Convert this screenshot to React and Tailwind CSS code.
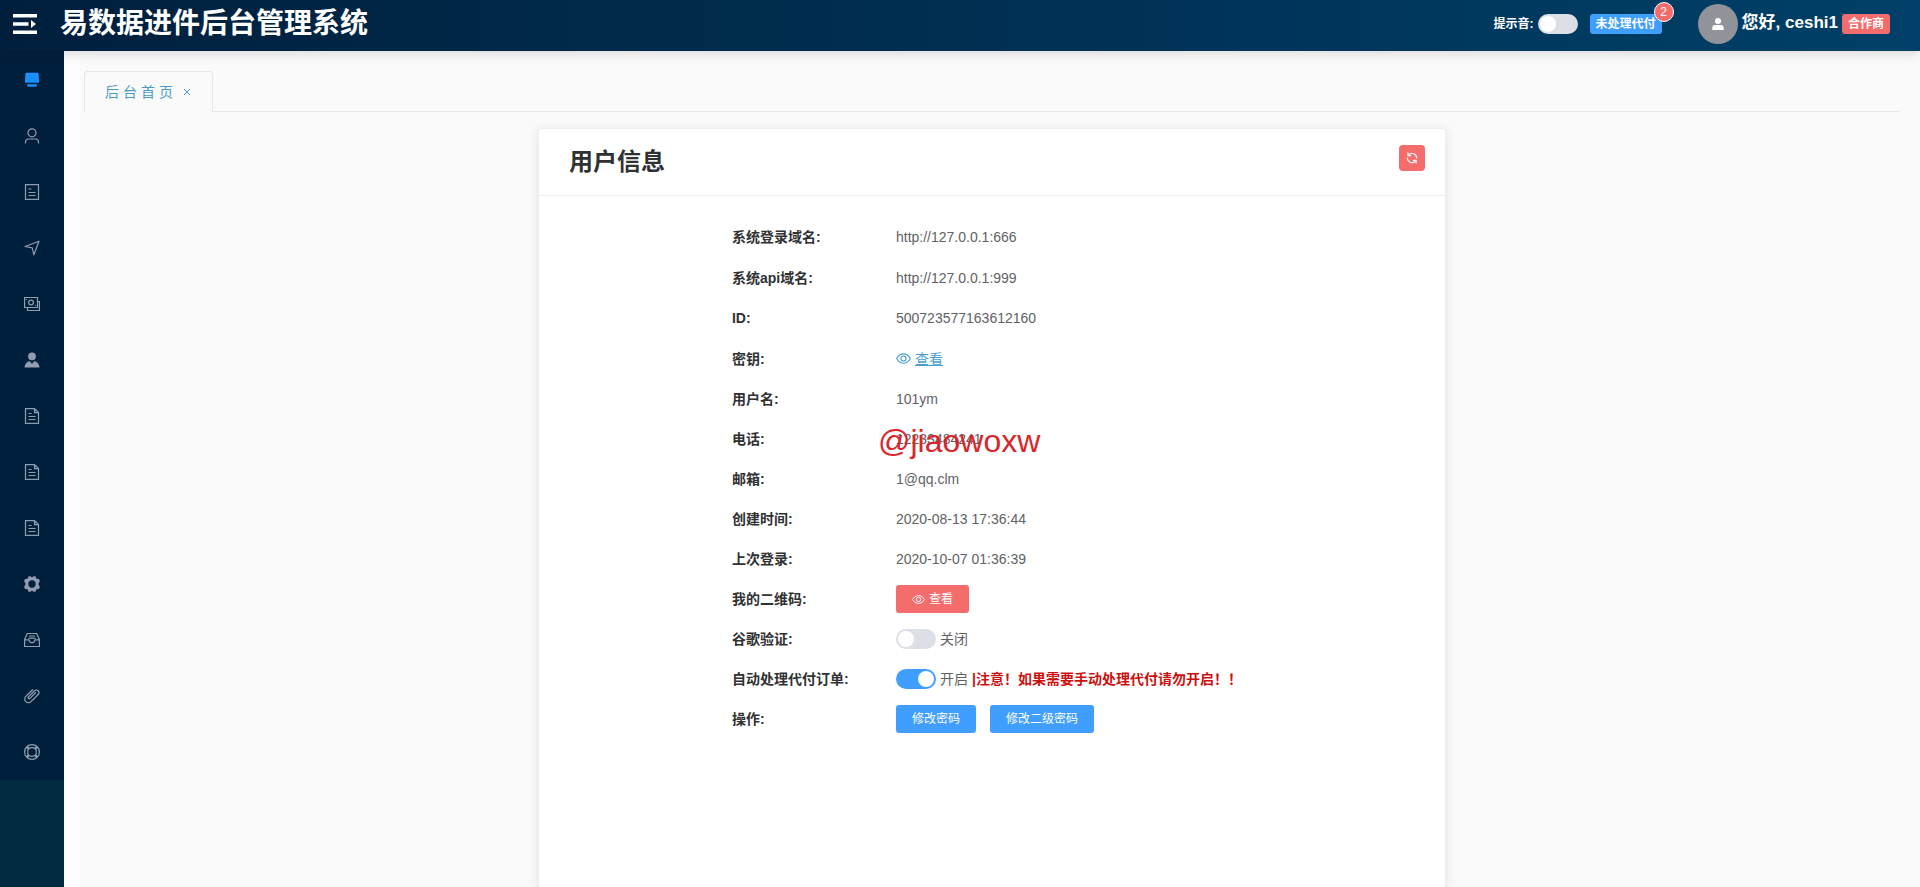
import React, { useState } from 'react';

const iconProps = {
  width: 16,
  height: 16,
  viewBox: '0 0 16 16',
  fill: 'none',
  stroke: 'currentColor',
  strokeWidth: 1,
  'aria-hidden': true,
};

const MenuToggleIcon = () => (
  <svg width="24" height="20" viewBox="0 0 24 20" fill="currentColor" aria-hidden="true">
    <path d="M0 0h24v3.6H0zM0 8.200h15.500v3.6H0zM0 16.400h24v3.6H0zM18 6l5 4-5 4z" />
  </svg>
);

const HomeIcon = () => (
  <svg {...iconProps} fill="currentColor" stroke="none">
    <path d="M2.500 .8h11q1 0 1.100 1l.5 7.700q0 1.300-1.100 1.300H2q-1.100 0-1.100-1.300l.5-7.700q.1-1 1.100-1zM3 12.200h10l-.6 2.600H3.600z" />
  </svg>
);

const UserIcon = () => (
  <svg {...iconProps} strokeWidth="1.200">
    <circle cx="8" cy="4.800" r="4" />
    <path d="M1.500 15.500v-1.500q0-3 3-3h7q3 0 3 3v1.500" />
  </svg>
);

const TicketsIcon = () => (
  <svg {...iconProps} strokeWidth="1.200">
    <path d="M1.500 .6h13v14.800h-13zM4.500 5h3M4.500 8.500h7M4.500 11.500h7" />
  </svg>
);

const PositionIcon = () => (
  <svg {...iconProps} strokeWidth="1.200">
    <path d="M1 6.500 15 1.200 9.800 15 8.300 7.900z" strokeLinejoin="round" />
  </svg>
);

const MoneyIcon = () => (
  <svg {...iconProps} strokeWidth="1.200">
    <path d="M.6 1.500h12.900v10H.6zM3.500 11.500v3h11.900v-9h-2" />
    <circle cx="7" cy="6.500" r="2.400" />
    <path d="M2 3.500h1M11 9.500h1" />
  </svg>
);

const CustomerIcon = () => (
  <svg {...iconProps} fill="currentColor" stroke="none">
    <circle cx="8" cy="4.300" r="3.900" />
    <path d="M.5 15.500q.3-5 5-6.500L8 11.800 10.500 9q4.700 1.500 5 6.500z" />
  </svg>
);

const DocumentIcon = () => (
  <svg {...iconProps} strokeWidth="1.200">
    <path d="M1.500 .6h9l4 4v10.800h-13zM10.500 .6v4h4M4.500 5.500h3M4.500 8.500h7M4.500 11.500h7" />
  </svg>
);

const SettingIcon = () => (
  <svg {...iconProps} fill="currentColor" stroke="none">
    <path
      fillRule="evenodd"
      d="M4.600 .3h1.800L8 1.400 9.600 .3h1.800l1.100 2.500 2.600.5.8 1.600L14.300 8l1.600 3.100-.8 1.600-2.600.5-1.100 2.500H9.600L8 14.600l-1.600 1.100H4.600l-1.100-2.500-2.600-.5-.8-1.600L1.700 8 .1 4.900l.8-1.600 2.600-.5zM8 4.300a3.700 3.700 0 1 0 0 7.400 3.700 3.700 0 0 0 0-7.400z"
    />
  </svg>
);

const MessageBoxIcon = () => (
  <svg {...iconProps} strokeWidth="1.200">
    <path d="M.6 14.500V7.500L3.300 1.500h9.400l2.700 6v7zM.6 7.800H5q.3 3 3 3t3-3h4.400M5 4h6M4.500 6.200h7" />
  </svg>
);

const PaperclipIcon = () => (
  <svg {...iconProps} strokeWidth="1.300" strokeLinecap="round">
    <path d="M11.500 4.800 5.900 10.400a1 1 0 0 1-1.500-1.500L10.500 2.800a2.600 2.600 0 0 1 3.700 3.700L7 13.600a3.600 3.600 0 0 1-5.200-5.200L8.500 1.700" />
  </svg>
);

const HelpIcon = () => (
  <svg {...iconProps} strokeWidth="1.200">
    <circle cx="8" cy="8" r="7.400" />
    <circle cx="8" cy="8" r="4.400" />
    <path d="M2.900 2.900l2 2M13.100 2.900l-2 2M2.900 13.100l2-2M13.100 13.100l-2-2" strokeWidth="2.500" />
  </svg>
);

const ViewIcon = ({ size }) => (
  <svg {...iconProps} width={size} height={size} strokeWidth="1.200">
    <path d="M.6 8Q3.500 3 8 3T15.400 8Q12.500 13 8 13T.6 8z" />
    <circle cx="8" cy="8" r="2.700" />
  </svg>
);

const RefreshIcon = () => (
  <svg {...iconProps} width="12" height="12" strokeWidth="1.500">
    <path d="M3.500 3.800A6.200 6.200 0 0 1 14.200 8.500M12.500 12.200A6.200 6.200 0 0 1 1.800 7.500" />
    <path d="M6.800 4.800H2.600V.8M9.200 11.200h4.200v4" />
  </svg>
);

const AvatarIcon = () => (
  <svg width="12" height="12" viewBox="0 0 12 12" fill="currentColor" aria-hidden="true">
    <circle cx="6" cy="3" r="3" />
    <path d="M.3 12v-2q0-3 3-3h5.400q3 0 3 3v2z" />
  </svg>
);

const MENU = [
  { label: '后台首页', icon: HomeIcon },
  { label: '用户', icon: UserIcon },
  { label: '订单', icon: TicketsIcon },
  { label: '通道', icon: PositionIcon },
  { label: '资金', icon: MoneyIcon },
  { label: '客户', icon: CustomerIcon },
  { label: '进件记录', icon: DocumentIcon },
  { label: '代付记录', icon: DocumentIcon },
  { label: '结算记录', icon: DocumentIcon },
  { label: '设置', icon: SettingIcon },
  { label: '消息', icon: MessageBoxIcon },
  { label: '附件', icon: PaperclipIcon },
  { label: '帮助', icon: HelpIcon },
];

function Switch({ id, checked, onChange, label }) {
  return (
    <input
      id={id}
      type="checkbox"
      role="switch"
      aria-label={label}
      checked={checked}
      onChange={(e) => onChange(e.target.checked)}
      className="flex h-5 w-10 shrink-0 cursor-pointer appearance-none items-center rounded-full bg-[#dcdfe6] px-0.5 before:size-4 before:rounded-full before:bg-white checked:justify-end checked:bg-[#409eff]"
    />
  );
}

function Row({ label, tall, children }) {
  return (
    <div className={`flex items-center ${tall ? 'h-[41px]' : 'h-10'}`}>
      <dt className="w-41 shrink-0 font-bold text-[#303133]">{label}:</dt>
      <dd className="relative flex items-center whitespace-nowrap">{children}</dd>
    </div>
  );
}

function Header({ sound, onSound }) {
  return (
    <header className="relative z-10 flex h-[51px] shrink-0 items-center bg-linear-to-r from-[#001f3d] to-[#004068] pr-[30px] pb-1 pl-[13px] text-white shadow-[0_2px_12px_rgba(0,0,0,0.15)]">
      <button type="button" aria-label="展开菜单" className="cursor-pointer">
        <MenuToggleIcon />
      </button>
      <h1 className="ml-[23px] text-[28px] leading-none font-bold">易数据进件后台管理系统</h1>

      <div className="ml-auto flex items-center text-xs font-bold">
        <label htmlFor="sound" className="mr-1">提示音:</label>
        <Switch id="sound" checked={sound} onChange={onSound} />
        <button type="button" className="relative ml-3 h-5 w-[72px] cursor-pointer rounded-[3px] bg-[#409eff] whitespace-nowrap">
          未处理代付
          <span className="absolute -top-3 -right-3 flex size-5 items-center justify-center rounded-full border border-white bg-[#f56c6c] font-normal">
            2
          </span>
        </button>
        <div className="ml-9 flex size-10 items-center justify-center rounded-full bg-[#909399]">
          <AvatarIcon />
        </div>
        <span className="ml-1 text-[17px]">您好, ceshi1</span>
        <span className="ml-1 flex h-5 items-center rounded-[3px] bg-[#f56c6c] px-1.5">合作商</span>
      </div>
    </header>
  );
}

function Sidebar() {
  return (
    <nav className="w-16 shrink-0 bg-[#022a40]">
      <ul className="bg-[#001f3d] pt-px">
        {MENU.map(({ label, icon: Icon }, idx) => (
          <li key={idx}>
            <a
              href="#"
              aria-label={label}
              className={`flex h-14 items-center justify-center ${idx === 0 ? 'text-[#1890ff]' : 'text-[#909db0]'}`}
            >
              <Icon />
            </a>
          </li>
        ))}
      </ul>
    </nav>
  );
}

export default function App() {
  const [sound, setSound] = useState(false);
  const [google, setGoogle] = useState(false);
  const [autoPay, setAutoPay] = useState(true);

  return (
    <div className="flex h-screen flex-col overflow-hidden bg-[#fafafa] font-['Liberation_Sans','Noto_Sans_CJK_SC',sans-serif] text-sm text-[#606266]">
      <Header sound={sound} onSound={setSound} />

      <div className="flex min-h-0 flex-1">
        <Sidebar />

        <main className="flex min-w-0 flex-1 flex-col border-l-16 border-[#fdfdfd] pt-5 pr-5 pl-1">
          {/* Open pages */}
          <div className="flex shrink-0 items-end">
            <div className="flex h-[41px] w-[129px] items-center rounded-t border border-b-0 border-[#e4e7ed] pl-5 text-[#4a9cc4]">
              <a href="#" className="tracking-[4px]">后台首页</a>
              <button type="button" aria-label="关闭" className="ml-1.5 cursor-pointer">
                <svg width="8" height="8" viewBox="0 0 8 8" stroke="currentColor" aria-hidden="true">
                  <path d="M1 1l6 6M7 1l-6 6" />
                </svg>
              </button>
            </div>
            <div className="h-px flex-1 bg-[#e4e7ed]" />
          </div>

          {/* User info card */}
          <section className="mx-auto mt-4 flex min-h-0 w-1/2 flex-1 flex-col rounded-t border border-b-0 border-[#ebeef5] bg-white shadow-[0_2px_12px_rgba(0,0,0,0.1)]">
            <div className="flex h-[67px] shrink-0 items-center justify-between border-b border-[#ebeef5] pr-5 pl-[30px]">
              <h2 className="text-2xl font-bold text-[#303133]">用户信息</h2>
              <button
                type="button"
                aria-label="刷新"
                className="mb-2 flex size-[26px] cursor-pointer items-center justify-center rounded bg-[#f56c6c] text-white"
              >
                <RefreshIcon />
              </button>
            </div>

            <dl className="pt-5 pl-[21.300%]">
              <Row label="系统登录域名" tall>http://127.0.0.1:666</Row>
              <Row label="系统api域名" tall>http://127.0.0.1:999</Row>
              <Row label="ID">500723577163612160</Row>
              <Row label="密钥" tall>
                <a href="#" className="flex items-center gap-1 text-[#4a9fd0]">
                  <ViewIcon size={15} />
                  <span className="underline">查看</span>
                </a>
              </Row>
              <Row label="用户名">101ym</Row>
              <Row label="电话">
                12233484241
                <span className="absolute -left-4.5 pt-1 text-[32px] leading-none text-[#d9262c]">@jiaowoxw</span>
              </Row>
              <Row label="邮箱">1@qq.clm</Row>
              <Row label="创建时间">2020-08-13 17:36:44</Row>
              <Row label="上次登录">2020-10-07 01:36:39</Row>
              <Row label="我的二维码">
                <button
                  type="button"
                  className="flex h-7 cursor-pointer items-center gap-1 rounded-[3px] bg-[#f56c6c] px-4 text-xs text-white"
                >
                  <ViewIcon size={13} />
                  查看
                </button>
              </Row>
              <Row label="谷歌验证">
                <Switch id="google" label="谷歌验证" checked={google} onChange={setGoogle} />
                <label htmlFor="google" className="ml-1">{google ? '开启' : '关闭'}</label>
              </Row>
              <Row label="自动处理代付订单">
                <Switch id="auto-pay" label="自动处理代付订单" checked={autoPay} onChange={setAutoPay} />
                <label htmlFor="auto-pay" className="ml-1">{autoPay ? '开启' : '关闭'}</label>
                <strong className="ml-1 font-bold text-[#cc1010]">|注意！如果需要手动处理代付请勿开启！！</strong>
              </Row>
              <Row label="操作">
                <div className="flex gap-3.5 text-xs text-white">
                  <button type="button" className="h-7 cursor-pointer rounded-[3px] bg-[#409eff] px-4">修改密码</button>
                  <button type="button" className="h-7 cursor-pointer rounded-[3px] bg-[#409eff] px-4">修改二级密码</button>
                </div>
              </Row>
            </dl>
          </section>
        </main>
      </div>
    </div>
  );
}
